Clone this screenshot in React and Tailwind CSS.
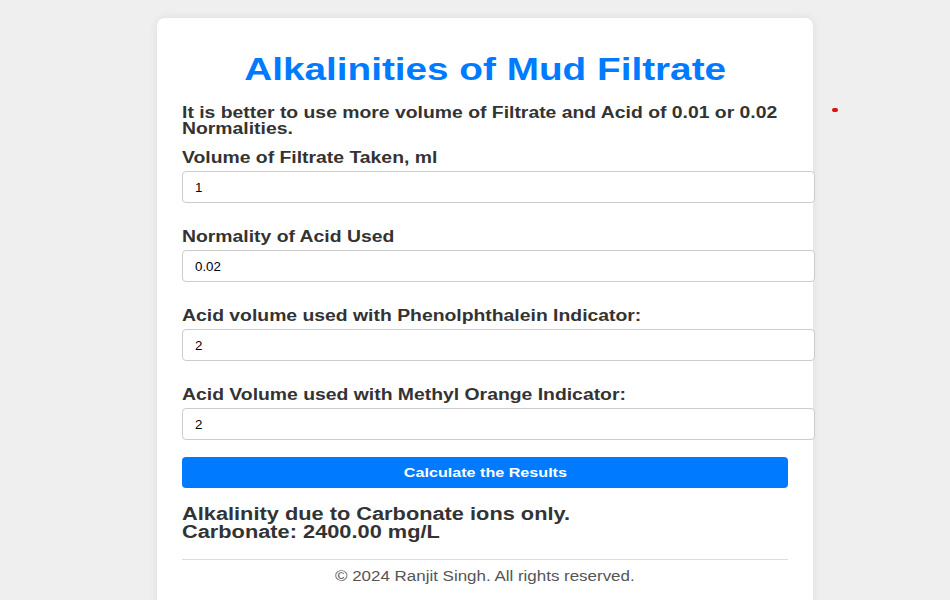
import React, { useState } from 'react';

const fields = [
  { label: 'Volume of Filtrate Taken, ml', value: '1' },
  { label: 'Normality of Acid Used', value: '0.02' },
  { label: 'Acid volume used with Phenolphthalein Indicator:', value: '2' },
  { label: 'Acid Volume used with Methyl Orange Indicator:', value: '2' },
];

// the screenshot's text is a little wide, stretch it to match
function Wide({ children, center }) {
  return (
    <span
      className={
        'inline-block whitespace-nowrap scale-x-[1.21] ' +
        (center ? 'origin-center' : 'origin-left')
      }
    >
      {children}
    </span>
  );
}

function Field({ label, value, onChange }) {
  return (
    <div className="mb-[25px] last:mb-0">
      <label className="block text-[16px] leading-[18px] font-bold text-[#333] mb-[4px]">
        <Wide>{label}</Wide>
      </label>
      <input
        type="text"
        value={value}
        onChange={onChange}
        className="block w-[633px] h-[32px] px-[12px] border border-[#ccc] rounded-[4px] bg-white text-[13.33px] text-black outline-none"
      />
    </div>
  );
}

export default function App() {
  const [values, setValues] = useState(fields.map((f) => f.value));

  return (
    <div className="relative h-[600px] overflow-hidden bg-[#efefef] font-['Liberation_Sans',Arial,sans-serif]">
      <div className="absolute left-[832px] top-[108px] w-[6px] h-[4px] rounded-full bg-[#e01010]" />
      <div className="ml-[157px] mt-[18px] w-[656px] bg-white rounded-[8px] shadow-[0_0_10px_rgba(0,0,0,0.08)] pt-[33px] px-[25px] pb-[40px]">
        <h1 className="text-center text-[32px] leading-[37px] font-bold text-[#007bff]">
          <Wide center>Alkalinities of Mud Filtrate</Wide>
        </h1>
        <p className="mt-[17px] text-[16px] leading-[16px] font-bold text-[#333]">
          <Wide>It is better to use more volume of Filtrate and Acid of 0.01 or 0.02</Wide>
          <br />
          <Wide>Normalities.</Wide>
        </p>
        <div className="mt-[12px]">
          {fields.map((f, i) => (
            <Field
              key={f.label}
              label={f.label}
              value={values[i]}
              onChange={(e) => {
                const next = [...values];
                next[i] = e.target.value;
                setValues(next);
              }}
            />
          ))}
        </div>
        <button className="mt-[17px] w-full h-[31px] rounded-[4px] bg-[#007bff] text-white text-[13.33px] font-bold">
          <Wide center>Calculate the Results</Wide>
        </button>
        <div className="mt-[17px] text-[18px] leading-[18px] font-bold text-[#333]">
          <div>
            <Wide>Alkalinity due to Carbonate ions only.</Wide>
          </div>
          <div>
            <Wide>Carbonate: 2400.00 mg/L</Wide>
          </div>
        </div>
        <div className="mt-[18px] border-t border-[#ddd] pt-[8px] text-center text-[14px] leading-[17px] text-[#555]">
          <Wide center>© 2024 Ranjit Singh. All rights reserved.</Wide>
        </div>
      </div>
    </div>
  );
}
